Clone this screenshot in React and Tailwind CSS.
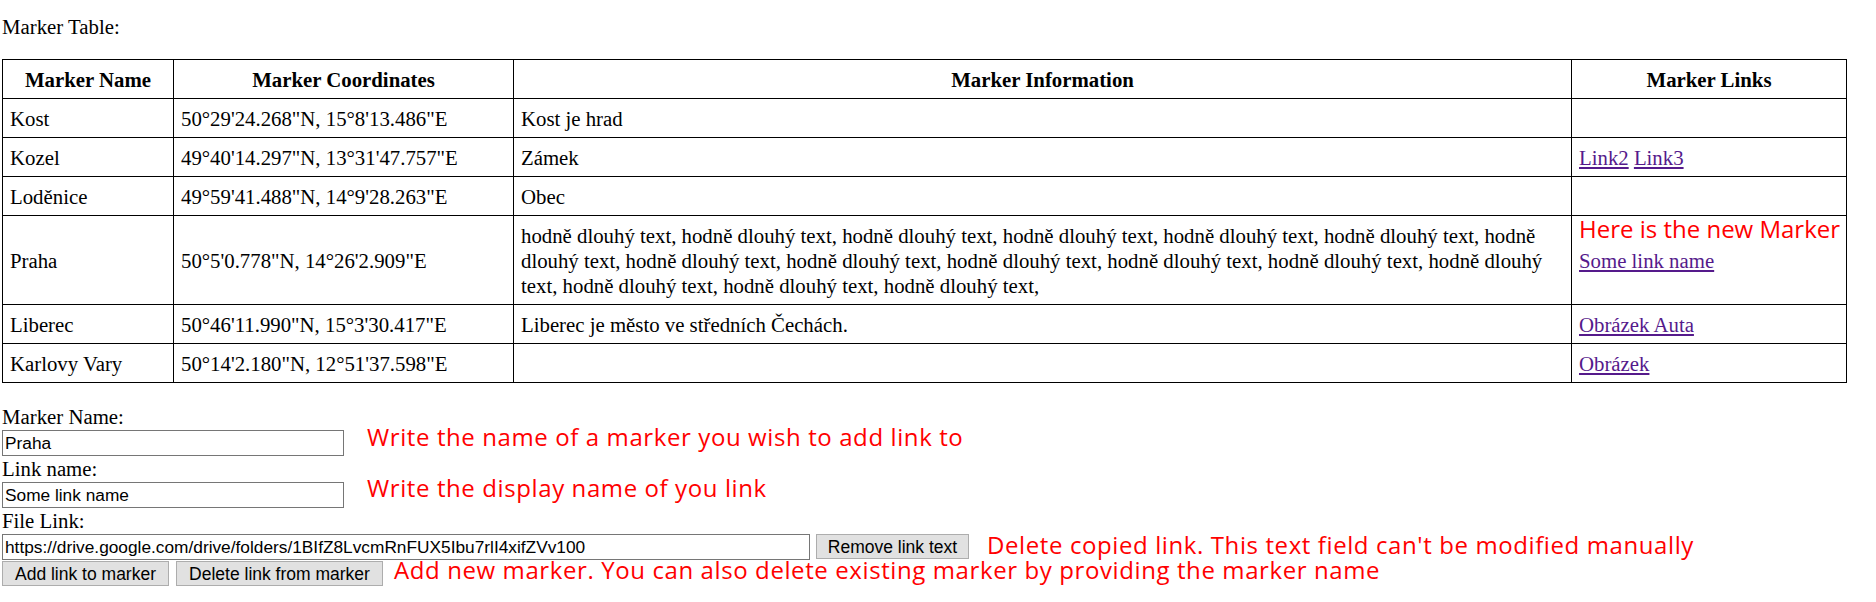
const longText = Array(16).fill('hodně dlouhý text,').join(' ');

const markers = [
  { name: 'Kost', coords: `50°29'24.268"N, 15°8'13.486"E`, info: 'Kost je hrad', links: [] },
  { name: 'Kozel', coords: `49°40'14.297"N, 13°31'47.757"E`, info: 'Zámek', links: ['Link2', 'Link3'] },
  { name: 'Loděnice', coords: `49°59'41.488"N, 14°9'28.263"E`, info: 'Obec', links: [] },
  { name: 'Praha', coords: `50°5'0.778"N, 14°26'2.909"E`, info: longText, links: ['Some link name'], note: 'Here is the new Marker' },
  { name: 'Liberec', coords: `50°46'11.990"N, 15°3'30.417"E`, info: 'Liberec je město ve středních Čechách.', links: ['Obrázek Auta'] },
  { name: 'Karlovy Vary', coords: `50°14'2.180"N, 12°51'37.598"E`, info: '', links: ['Obrázek'] },
];

const cell = 'border border-black pt-[7px] pb-[6px] px-[7px] leading-[25px] align-middle';
const note = "font-['Open_Sans',sans-serif] text-[24px] leading-[24px] text-[#ff0000] whitespace-nowrap";
const formNote = `${note} tracking-[0.6px]`;
const field = "block h-[26px] border border-[#767676] bg-white px-[2px] text-[17.3px] text-black font-['Liberation_Sans',Arial,sans-serif] outline-none";
const btn = "h-[25px] bg-[#e1e1e1] border border-[#adadad] text-[17.5px] text-black font-['Liberation_Sans',Arial,sans-serif]";

const App = () => {
  return (
    <div className="min-h-screen bg-white pl-[2px] pt-[14px] text-[20.8px] leading-[25px] text-black font-['Liberation_Serif','Times_New_Roman',serif]">
      <div>Marker Table:</div>

      <table className="mt-[20px] w-[1844px] table-fixed border-collapse border border-black">
        <colgroup>
          <col className="w-[171px]" />
          <col className="w-[340px]" />
          <col className="w-[1058px]" />
          <col className="w-[275px]" />
        </colgroup>
        <thead>
          <tr>
            <th className={`${cell} text-center font-bold`}>Marker Name</th>
            <th className={`${cell} text-center font-bold`}>Marker Coordinates</th>
            <th className={`${cell} text-center font-bold`}>Marker Information</th>
            <th className={`${cell} text-center font-bold`}>Marker Links</th>
          </tr>
        </thead>
        <tbody>
          {markers.map((m) => (
            <tr key={m.name}>
              <td className={cell}>{m.name}</td>
              <td className={cell}>{m.coords}</td>
              <td className={cell}>{m.info}</td>
              <td className={`${cell} relative`}>
                {m.note && (
                  <span className={`${note} absolute top-[1px] left-[7px]`}>{m.note}</span>
                )}
                {m.links.map((l, i) => (
                  <span key={l}>
                    {i > 0 && ' '}
                    <a href="#" className="text-[#551a8b] underline">{l}</a>
                  </span>
                ))}
              </td>
            </tr>
          ))}
        </tbody>
      </table>

      <div className="mt-[21px]">
        <div className="leading-[26px]">Marker Name:</div>
        <div className="flex items-start">
          <input readOnly value="Praha" className={`${field} w-[342px]`} />
          <span className={`${formNote} ml-[23px] -mt-[5px]`}>Write the name of a marker you wish to add link to</span>
        </div>

        <div className="leading-[26px]">Link name:</div>
        <div className="flex items-start">
          <input readOnly value="Some link name" className={`${field} w-[342px]`} />
          <span className={`${formNote} ml-[23px] -mt-[6px]`}>Write the display name of you link</span>
        </div>

        <div className="leading-[26px]">File Link:</div>
        <div className="flex items-start">
          <input
            readOnly
            value="https://drive.google.com/drive/folders/1BIfZ8LvcmRnFUX5Ibu7rlI4xifZVv100"
            className={`${field} w-[808px]`}
          />
          <button className={`${btn} ml-[6px] w-[153px]`}>Remove link text</button>
          <span className={`${formNote} ml-[18px] -mt-[1px]`}>Delete copied link. This text field can't be modified manually</span>
        </div>

        <div className="mt-[1px] flex items-start">
          <button className={`${btn} w-[167px]`}>Add link to marker</button>
          <button className={`${btn} ml-[7px] w-[207px]`}>Delete link from marker</button>
          <span className={`${formNote} ml-[11px] -mt-[3px]`}>Add new marker. You can also delete existing marker by providing the marker name</span>
        </div>
      </div>
    </div>
  );
};

export default App;
